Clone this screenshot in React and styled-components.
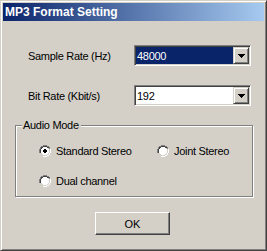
import React, { useState } from "react";
import styled, { createGlobalStyle } from "styled-components";

const GlobalStyle = createGlobalStyle`
    html, body {
        margin: 0;
        padding: 0;
        background: #d4d0c8;
    }
    * {
        box-sizing: border-box;
    }
`;

const Window = styled.div`
    width: 267px;
    height: 251px;
    background: #d4d0c8;
    border: 1px solid;
    border-color: #d4d0c8 #404040 #404040 #d4d0c8;
    box-shadow: inset 1px 1px #fff, inset -1px -1px #808080;
    padding: 2px;
    display: flex;
    flex-direction: column;
    font-family: "Liberation Sans", Arial, sans-serif;
    font-size: 11px;
    letter-spacing: -0.3px;
    color: #000;
`;

const TitleBar = styled.div`
    height: 18px;
    display: flex;
    align-items: center;
    padding-left: 2px;
    background: linear-gradient(to right, #0a246a, #a6caf0);
    color: #fff;
    font-weight: bold;
    font-size: 12px;
    letter-spacing: 0;
`;

const Body = styled.div`
    flex: 1;
    display: flex;
    flex-direction: column;
    padding: 24px 11px 0 12px;
`;

const FormRow = styled.div`
    display: flex;
    align-items: center;
    height: 21px;
    padding-left: 13px;
    margin-bottom: 19px;
`;

const FieldLabel = styled.span`
    width: 106px;
`;

const Combo = styled.div`
    width: 117px;
    height: 21px;
    display: flex;
    align-items: stretch;
    border: 1px solid;
    border-color: #808080 #fff #fff #808080;
    box-shadow: inset 1px 1px #404040, inset -1px -1px #d4d0c8;
    padding: 2px;
    background: #fff;
`;

const ComboValue = styled.div`
    flex: 1;
    display: flex;
    align-items: center;
    padding-left: 1px;
    background: ${(p) => (p.$selected ? "#0a246a" : "#fff")};
    color: ${(p) => (p.$selected ? "#fff" : "#000")};
    margin: -1px 0 -1px -1px;
`;

const DropButton = styled.div`
    width: 16px;
    margin: -1px -1px -1px 0;
    display: flex;
    align-items: center;
    justify-content: center;
    background: #d4d0c8;
    border: 1px solid;
    border-color: #d4d0c8 #404040 #404040 #d4d0c8;
    box-shadow: inset 1px 1px #fff, inset -1px -1px #808080;
`;

const GroupBox = styled.div`
    position: relative;
    height: 72px;
    width: 238px;
    border: 1px solid #808080;
    box-shadow: inset 1px 1px #fff, 1px 1px #fff;
    padding: 18px 0 0 23px;
    display: grid;
    grid-template-columns: 118px auto;
    grid-auto-rows: 13px;
    row-gap: 17px;
`;

const Legend = styled.span`
    position: absolute;
    top: -7px;
    left: 6px;
    padding: 0 2px 0 1px;
    background: #d4d0c8;
    line-height: 13px;
`;

const RadioLabel = styled.label`
    display: flex;
    align-items: center;
    gap: 5px;
    cursor: default;
`;

const OkButton = styled.button`
    width: 75px;
    height: 23px;
    margin: 15px 0 0 80px;
    padding: 0;
    background: #d4d0c8;
    border: 1px solid;
    border-color: #fff #404040 #404040 #fff;
    box-shadow: inset -1px -1px #808080;
    font-family: "Liberation Sans", Arial, sans-serif;
    font-size: 11px;
    color: #000;
`;

function Arrow() {
    return (
        <svg width="7" height="4" viewBox="0 0 7 4">
            <path d="M0 0h7v1H6v1H5v1H4v1H3V3H2V2H1V1H0z" fill="#000" />
        </svg>
    );
}

function RadioDot({ checked }) {
    return (
        <svg width="12" height="12" viewBox="0 0 12 12" shapeRendering="crispEdges">
            <path d="M4 0h4v1h2v1h1v2h-1V2H8V1H4v1H2v2H1v4H0V4h1V2h1V1h2z" fill="#808080" />
            <path d="M4 1h4v1h2v1H8V2H4v1H3v1H2v4H1V4h1V2h2z" fill="#404040" />
            <path d="M4 2h4v1h1v1h1v4H9v1H8v1H4V9H3V8H2V4h1V3h1z" fill="#fff" />
            <path d="M10 4h1v4h-1v2H8v1H4v-1h4V9h1V8h1z" fill="#d4d0c8" />
            <path d="M11 4h1v4h-1v2h-1v1H8v1H4v-1h4v-1h2V8h1z" fill="#fff" />
            {checked && <path d="M5 4h2v1h1v2H7v1H5V7H4V5h1z" fill="#000" />}
        </svg>
    );
}

function Radio({ label, checked, onSelect }) {
    return (
        <RadioLabel onClick={onSelect}>
            <RadioDot checked={checked} />
            {label}
        </RadioLabel>
    );
}

export default function App() {
    const [mode, setMode] = useState("standard");

    return (
        <>
            <GlobalStyle />
            <Window>
                <TitleBar>MP3 Format Setting</TitleBar>
                <Body>
                    <FormRow>
                        <FieldLabel>Sample Rate (Hz)</FieldLabel>
                        <Combo>
                            <ComboValue $selected>48000</ComboValue>
                            <DropButton>
                                <Arrow />
                            </DropButton>
                        </Combo>
                    </FormRow>
                    <FormRow>
                        <FieldLabel>Bit Rate (Kbit/s)</FieldLabel>
                        <Combo>
                            <ComboValue>192</ComboValue>
                            <DropButton>
                                <Arrow />
                            </DropButton>
                        </Combo>
                    </FormRow>
                    <GroupBox>
                        <Legend>Audio Mode</Legend>
                        <Radio
                            label="Standard Stereo"
                            checked={mode === "standard"}
                            onSelect={() => setMode("standard")}
                        />
                        <Radio
                            label="Joint Stereo"
                            checked={mode === "joint"}
                            onSelect={() => setMode("joint")}
                        />
                        <Radio
                            label="Dual channel"
                            checked={mode === "dual"}
                            onSelect={() => setMode("dual")}
                        />
                    </GroupBox>
                    <OkButton>OK</OkButton>
                </Body>
            </Window>
        </>
    );
}
